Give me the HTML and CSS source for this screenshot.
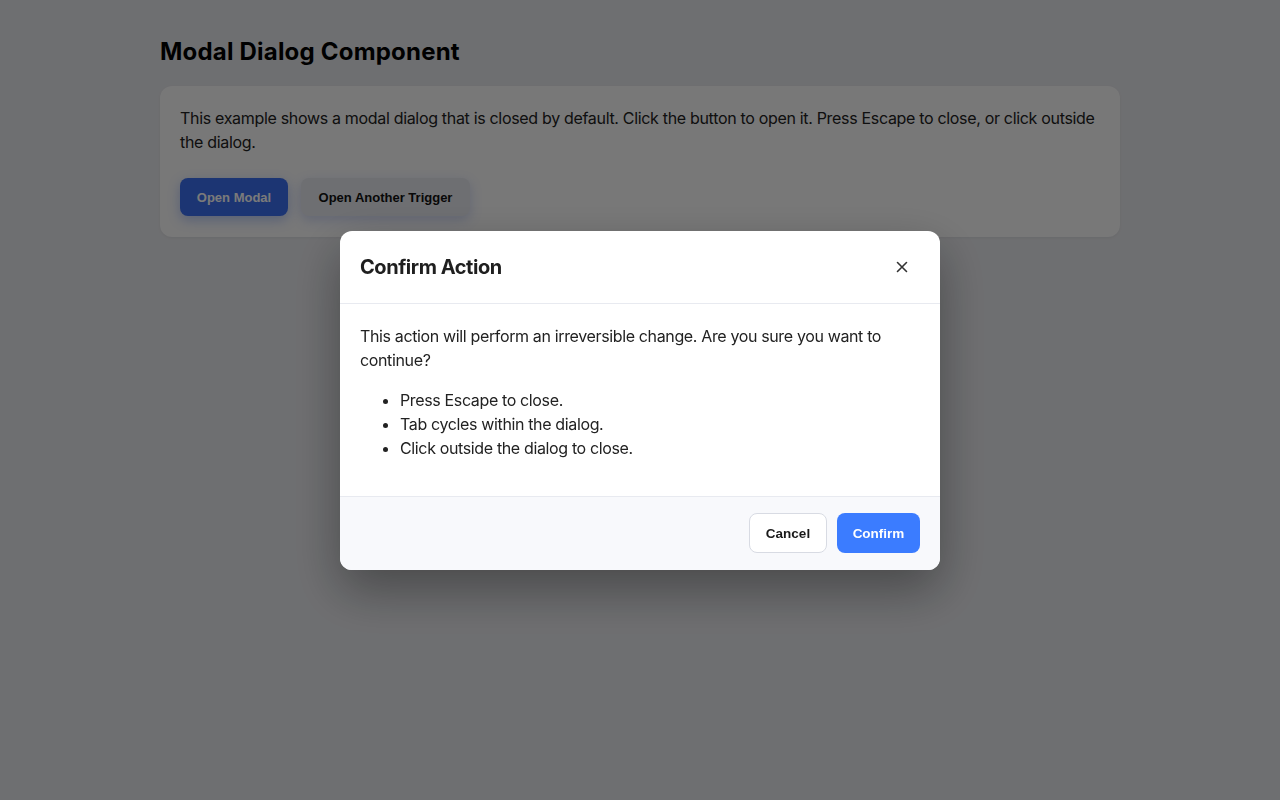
FILE: index.html
```html
<!DOCTYPE html>
<html lang="en">
<head>
<meta charset="utf-8">
<title>Modal Dialog Component</title>
<link rel="stylesheet" href="styles.css">
</head>
<body>
<main class="page">
  <h1 class="title">Modal Dialog Component</h1>
  <section class="card">
    <p class="card-text">This example shows a modal dialog that is closed by default. Click the button to open it. Press Escape to close, or click outside the dialog.</p>
    <div class="actions">
      <button class="btn btn-primary btn-open">Open Modal</button>
      <button class="btn btn-secondary">Open Another Trigger</button>
    </div>
  </section>
</main>
<div class="backdrop">
  <div class="dialog" role="dialog" aria-modal="true" aria-labelledby="dlg-title">
    <header class="dialog-header">
      <h2 class="dialog-title" id="dlg-title">Confirm Action</h2>
      <button class="close" aria-label="Close">
        <svg width="14" height="14" viewBox="0 0 14 14" fill="none" stroke="#333" stroke-width="1.6" stroke-linecap="round"><path d="M2.5 2.5l9 9M11.5 2.5l-9 9"/></svg>
      </button>
    </header>
    <div class="dialog-body">
      <p class="body-text">This action will perform an irreversible change. Are you sure you want to continue?</p>
      <ul class="body-list">
        <li>Press Escape to close.</li>
        <li>Tab cycles within the dialog.</li>
        <li>Click outside the dialog to close.</li>
      </ul>
    </div>
    <footer class="dialog-footer">
      <button class="btn btn-cancel">Cancel</button>
      <button class="btn btn-confirm">Confirm</button>
    </footer>
  </div>
</div>
</body>
</html>
```
FILE: styles.css
```css
* { box-sizing: border-box; }
html, body { margin: 0; height: 100%; }
body {
  background: #e7e8ec;
  font-family: Inter, "Noto Sans", sans-serif;
  color: #222;
}
.page {
  width: 960px;
  margin: 0 auto;
  padding-top: 36px;
}
.title {
  margin: 0 0 18px;
  font-size: 24px;
  line-height: 32px;
  font-weight: 700;
  color: #000;
  letter-spacing: 0.2px;
}
.card {
  background: #fafafb;
  border-radius: 12px;
  padding: 20px 20px 21px;
  box-shadow: 0 1px 3px rgba(0,0,0,0.06);
}
.card-text {
  margin: 0 0 24px;
  font-size: 16px;
  line-height: 24px;
  color: #222;
  letter-spacing: -0.32px;
}
.actions { display: flex; gap: 13px; }
.btn {
  font-family: "Liberation Sans", Arial, sans-serif;
  font-weight: 700;
  font-size: 13px;
  border: 0;
  border-radius: 8px;
  cursor: pointer;
}
.btn-primary {
  height: 38px;
  width: 108px;
  background: #3b6ff0;
  color: #fff;
  box-shadow: 0 4px 12px rgba(59,111,240,0.35);
}
.btn-secondary {
  height: 38px;
  width: 169px;
  background: #e6e8ee;
  color: #111;
  box-shadow: 0 4px 12px rgba(80,110,220,0.25);
}
.backdrop {
  position: fixed;
  inset: 0;
  background: rgba(0,0,0,0.52);
  backdrop-filter: blur(0.5px);
  display: flex;
  justify-content: center;
  align-items: flex-start;
  padding-top: 231px;
}
.dialog {
  width: 600px;
  background: #fff;
  border-radius: 12px;
  overflow: hidden;
  box-shadow: 0 20px 50px rgba(0,0,0,0.35);
}
.dialog-header {
  display: flex;
  align-items: center;
  justify-content: space-between;
  padding: 20px;
  border-bottom: 1px solid #e8eaf0;
}
.dialog-title {
  margin: 0;
  font-size: 20px;
  line-height: 32px;
  font-weight: 700;
  color: #1f1f1f;
  letter-spacing: -0.45px;
}
.close {
  width: 32px;
  height: 32px;
  border: 0;
  background: transparent;
  display: flex;
  align-items: center;
  justify-content: center;
  padding: 0;
  margin-right: 2px;
  border-radius: 6px;
  cursor: pointer;
}
.dialog-body {
  padding: 20px;
  border-bottom: 1px solid #e8eaf0;
  font-size: 16px;
  line-height: 24px;
  color: #222;
  letter-spacing: -0.36px;
}
.body-text { margin: 0 0 16px; }
.body-list { margin: 0 0 16px; padding-left: 40px; }
.dialog-footer {
  background: #f8f9fc;
  padding: 16px 20px 17px;
  display: flex;
  justify-content: flex-end;
  gap: 10px;
}
.btn-cancel {
  height: 40px;
  width: 78px;
  background: #fff;
  color: #1a1a1a;
  border: 1px solid #d8dbe3;
  font-size: 13.5px;
}
.btn-confirm {
  height: 40px;
  width: 83px;
  background: #3b7cff;
  color: #fff;
  font-size: 13.5px;
}
```
